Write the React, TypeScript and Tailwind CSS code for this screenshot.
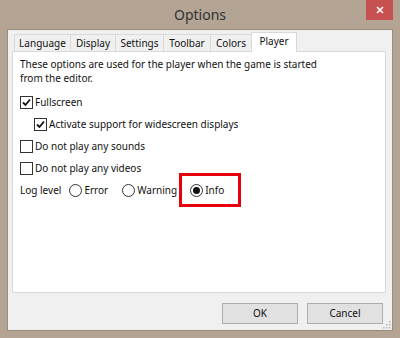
const font = { fontFamily: '"Noto Sans", "Open Sans", sans-serif' };

function Check({ checked }: { checked?: boolean }) {
  return (
    <span className="inline-flex h-[13px] w-[13px] shrink-0 items-center justify-center border border-[#333333] bg-white">
      {checked && (
        <svg width="9" height="9" viewBox="0 0 9 9">
          <path d="M1 4.5 L3.5 7 L8 1.5" fill="none" stroke="#111" strokeWidth="1.8" />
        </svg>
      )}
    </span>
  );
}

function Radio({ checked }: { checked?: boolean }) {
  return (
    <span className="inline-flex h-[13px] w-[13px] shrink-0 items-center justify-center rounded-full border border-[#333333] bg-white">
      {checked && <span className="h-[7px] w-[7px] rounded-full bg-[#111]" />}
    </span>
  );
}

const tabs = [
  { label: "Language", w: "w-[57px]" },
  { label: "Display", w: "w-[46px]" },
  { label: "Settings", w: "w-[49px]" },
  { label: "Toolbar", w: "w-[48px]" },
  { label: "Colors", w: "w-[42px]" },
];

export default function App() {
  return (
    <div
      className="flex h-[338px] w-[400px] flex-col bg-[#b4a494] text-[10px] text-[#111]"
      style={font}
    >
      {/* title bar */}
      <div className="relative flex h-[29px] shrink-0 items-center justify-center">
        <span className="-mt-[1px] text-[14px] text-[#333]">Options</span>
        <button className="absolute right-[7px] top-0 flex h-[20px] w-[27px] items-center justify-center bg-[#c75050]">
          <svg width="8" height="8" viewBox="0 0 8 8">
            <path d="M1 1 L7 7 M7 1 L1 7" stroke="#fff" strokeWidth="1.6" />
          </svg>
        </button>
      </div>

      {/* client area */}
      <div className="relative mx-[7px] mb-[7px] flex flex-1 flex-col border border-[#9c8c7c] bg-[#f0f0f0] pl-[4px] pr-[6px]">
        <div className="flex h-[21px] items-end pl-[2px]">
          {tabs.map((t) => (
            <div
              key={t.label}
              className={`-mr-[1px] flex h-[17px] ${t.w} items-center justify-center border border-b-0 border-[#d9d9d9] bg-[#f0f0f0] leading-none`}
            >
              {t.label}
            </div>
          ))}
          <div className="relative z-10 -mb-[1px] flex h-[20px] w-[46px] items-start justify-center border border-b-0 border-[#d9d9d9] bg-white pt-[3px] leading-none">
            Player
          </div>
        </div>

        <div className="h-[242px] border border-[#d9d9d9] bg-white pl-[7px] pt-[5px] leading-[14px]">
          <p>
            These options are used for the player when the game is started
            <br />
            from the editor.
          </p>
          <div className="mt-[6px] flex h-[22px] items-center gap-[2px]">
            <Check checked />
            <span>Fullscreen</span>
          </div>
          <div className="flex h-[22px] items-center gap-[2px] pl-[14px]">
            <Check checked />
            <span>Activate support for widescreen displays</span>
          </div>
          <div className="flex h-[22px] items-center gap-[2px]">
            <Check />
            <span>Do not play any sounds</span>
          </div>
          <div className="flex h-[22px] items-center gap-[2px]">
            <Check />
            <span>Do not play any videos</span>
          </div>
          <div className="flex h-[22px] items-center">
            <span>Log level</span>
            <span className="ml-[8px] flex items-center gap-[2px]">
              <Radio />
              <span>Error</span>
            </span>
            <span className="ml-[14px] flex items-center gap-[2px]">
              <Radio />
              <span>Warning</span>
            </span>
            <span className="-my-[6px] ml-[2px] flex h-[34px] items-center gap-[2px] border-[3px] border-[#e8000b] pl-[8px] pr-[14px]">
              <Radio checked />
              <span>Info</span>
            </span>
          </div>
        </div>

        <div className="flex flex-1 items-start justify-end gap-[9px] pt-[10px] pr-[3px]">
          <button className="flex h-[21px] w-[76px] items-center justify-center border border-[#adadad] bg-[#e1e1e1]">
            OK
          </button>
          <button className="flex h-[21px] w-[76px] items-center justify-center border border-[#adadad] bg-[#e1e1e1]">
            Cancel
          </button>
        </div>

        <svg className="absolute bottom-[1px] right-[1px]" width="8" height="8" viewBox="0 0 8 8">
          <g fill="#b5b5b5">
            <rect x="6" y="0" width="1.5" height="1.5" />
            <rect x="3" y="3" width="1.5" height="1.5" />
            <rect x="6" y="3" width="1.5" height="1.5" />
            <rect x="0" y="6" width="1.5" height="1.5" />
            <rect x="3" y="6" width="1.5" height="1.5" />
            <rect x="6" y="6" width="1.5" height="1.5" />
          </g>
        </svg>
      </div>
    </div>
  );
}
